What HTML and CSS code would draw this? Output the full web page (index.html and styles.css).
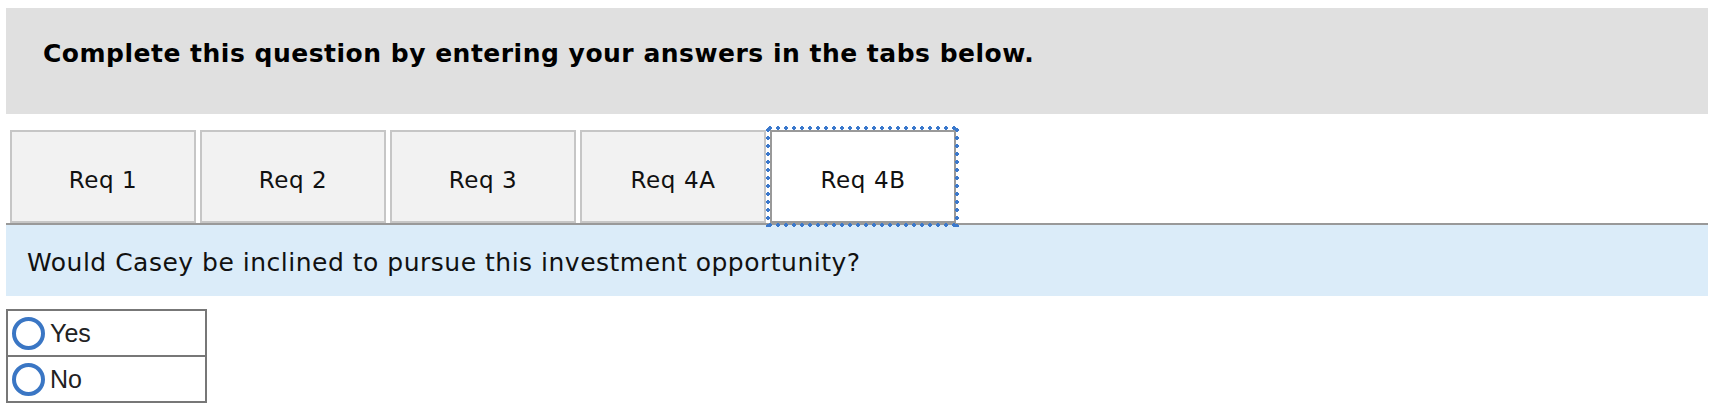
FILE: index.html
```html
<!DOCTYPE html>
<html lang="en">
<head>
<meta charset="utf-8">
<title>Question</title>
<link rel="stylesheet" href="styles.css">
</head>
<body>
<div class="page">
  <div class="banner">Complete this question by entering your answers in the tabs below.</div>
  <div class="tabs">
    <div class="tab">Req 1</div>
    <div class="tab">Req 2</div>
    <div class="tab">Req 3</div>
    <div class="tab">Req 4A</div>
    <div class="tab active">Req 4B</div>
  </div>
  <div class="prompt">Would Casey be inclined to pursue this investment opportunity?</div>
  <div class="choices">
    <label class="choice"><span class="radio"></span><span class="label">Yes</span></label>
    <label class="choice"><span class="radio"></span><span class="label">No</span></label>
  </div>
</div>
</body>
</html>
```

FILE: styles.css
```css
html, body {
  margin: 0;
  padding: 0;
  background: #ffffff;
}

.page {
  width: 1702px;
  margin: 8px 0 0 6px;
  font-family: "DejaVu Sans", Verdana, sans-serif;
  color: #111111;
}

.banner {
  background: #e0e0e0;
  height: 106px;
  box-sizing: border-box;
  padding: 31px 0 0 37px;
  font-size: 25px;
  font-weight: bold;
  letter-spacing: 0.5px;
  color: #000000;
}

.tabs {
  display: flex;
  gap: 4px;
  padding-left: 4px;
  margin-top: 16px;
  border-bottom: 2px solid #999999;
}

.tab {
  position: relative;
  width: 186px;
  height: 93px;
  box-sizing: border-box;
  border: 2px solid #c6c6c6;
  background: #f2f2f2;
  display: flex;
  align-items: center;
  justify-content: center;
  padding-top: 6px;
  font-size: 23px;
  letter-spacing: 0.6px;
  color: #111111;
}

.tab.active {
  background: #ffffff;
  border-color: #999999;
}

.tab.active::after {
  content: "";
  position: absolute;
  top: -6px;
  left: -6px;
  right: -5px;
  bottom: -6px;
  pointer-events: none;
  background-image:
    radial-gradient(circle at center, #3a78cc 1.6px, transparent 2.1px),
    radial-gradient(circle at center, #3a78cc 1.6px, transparent 2.1px),
    radial-gradient(circle at center, #3a78cc 1.6px, transparent 2.1px),
    radial-gradient(circle at center, #3a78cc 1.6px, transparent 2.1px);
  background-size: 8px 4px, 8px 4px, 4px 8px, 4px 8px;
  background-position: left top, left bottom, left top, right top;
  background-repeat: repeat-x, repeat-x, repeat-y, repeat-y;
}

.prompt {
  background: #dbecf9;
  height: 71px;
  box-sizing: border-box;
  padding: 23px 0 0 21px;
  font-size: 25px;
  letter-spacing: 0.5px;
  color: #111111;
}

.choices {
  margin-top: 13px;
  width: 201px;
  box-sizing: border-box;
  border: 2px solid #777777;
  font-family: "Liberation Sans", Arial, sans-serif;
}

.choice {
  display: flex;
  align-items: center;
  height: 44px;
  padding-left: 4px;
  gap: 5px;
}

.choice + .choice {
  border-top: 2px solid #777777;
}

.radio {
  width: 33px;
  height: 33px;
  box-sizing: border-box;
  border: 4px solid #3a76c4;
  border-radius: 50%;
  background: #ffffff;
}

.label {
  font-size: 25px;
  color: #222222;
}
```
